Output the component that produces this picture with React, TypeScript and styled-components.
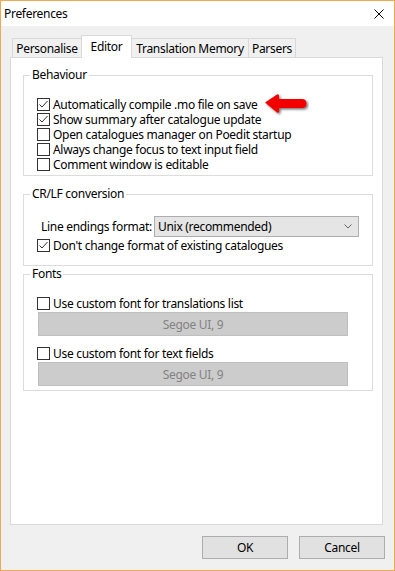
import React from 'react';
import styled, { createGlobalStyle } from "styled-components";


const GlobalStyle = createGlobalStyle`
    html, body {
        margin: 0;
        padding: 0;
        background: #fff;
    }
    body {
        font-family: "Noto Sans", "Open Sans", sans-serif;
        font-size: 12px;
        letter-spacing: -0.3px;
        color: #000;
    }
`

type TabType = {
    title: string
    width: number
    active?: boolean
}

const tabs: TabType[] = [
    {title: 'Personalise', width: 70},
    {title: 'Editor', width: 51, active: true},
    {title: 'Translation Memory', width: 118},
    {title: 'Parsers', width: 48},
]

const CheckBox = (props: { checked?: boolean }) => {
    return (
        <Box>
            {props.checked &&
                <svg width="11" height="11" viewBox="0 0 11 11">
                    <polyline points="1.5,5.5 4,8 9.5,2" fill="none" stroke="#333" strokeWidth="1"/>
                </svg>}
        </Box>
    );
};

const Option = (props: { label: string, checked?: boolean, children?: React.ReactNode }) => {
    return (
        <Row>
            <CheckBox checked={props.checked}/>
            <span>{props.label}</span>
            {props.children}
        </Row>
    );
};

const RedArrow = () => {
    return (
        <Arrow width="46" height="24" viewBox="0 0 46 24">
            <defs>
                <filter id="arrowShadow" x="-20%" y="-30%" width="150%" height="180%">
                    <feDropShadow dx="1.5" dy="1.5" stdDeviation="1" floodColor="#000" floodOpacity="0.55"/>
                </filter>
            </defs>
            <path
                d="M2,10.5 L14,2.5 Q16,1.5 16,4 L16,7 L39,7 Q43.5,7 43.5,11.5 Q43.5,16 39,16 L16,16 L16,19 Q16,21.5 14,20.5 Z"
                fill="#f20000"
                filter="url(#arrowShadow)"
            />
        </Arrow>
    );
};

export default function App() {
    return (
        <>
            <GlobalStyle/>
            <Window>
                <TitleBar>
                    <span>Preferences</span>
                    <svg width="10" height="10" viewBox="0 0 10 10">
                        <path d="M0.5,0.5 L9.5,9.5 M9.5,0.5 L0.5,9.5" stroke="#000" strokeWidth="1"/>
                    </svg>
                </TitleBar>
                <Body>
                    <TabStrip>
                        {tabs.map(t =>
                            <Tab key={t.title} $width={t.width} $active={t.active}>{t.title}</Tab>
                        )}
                    </TabStrip>
                    <Panel>
                        <Group $top={9} $bottom={3}>
                            <Legend>Behaviour</Legend>
                            <Option label="Automatically compile .mo file on save" checked>
                                <RedArrow/>
                            </Option>
                            <Option label="Show summary after catalogue update" checked/>
                            <Option label="Open catalogues manager on Poedit startup"/>
                            <Option label="Always change focus to text input field"/>
                            <Option label="Comment window is editable"/>
                        </Group>
                        <Group $top={10} $bottom={12}>
                            <Legend>CR/LF conversion</Legend>
                            <SelectRow>
                                <SelectLabel>Line endings format:</SelectLabel>
                                <Select>
                                    <span>Unix (recommended)</span>
                                    <svg width="8" height="5" viewBox="0 0 8 5">
                                        <polyline points="0.5,0.5 4,4 7.5,0.5" fill="none" stroke="#666" strokeWidth="1"/>
                                    </svg>
                                </Select>
                            </SelectRow>
                            <Spaced $top={1}>
                                <Option label="Don't change format of existing catalogues" checked/>
                            </Spaced>
                        </Group>
                        <Group $top={0} $bottom={4}>
                            <Legend>Fonts</Legend>
                            <Option label="Use custom font for translations list"/>
                            <FontButton>Segoe UI, 9</FontButton>
                            <Spaced $top={10}>
                                <Option label="Use custom font for text fields"/>
                            </Spaced>
                            <FontButton>Segoe UI, 9</FontButton>
                        </Group>
                    </Panel>
                </Body>
                <Footer>
                    <Button>OK</Button>
                    <Button>Cancel</Button>
                </Footer>
            </Window>
        </>
    );
}

const Window = styled.div`
    width: 395px;
    height: 571px;
    box-sizing: border-box;
    border: 1px solid #efa94f;
    background-color: #f0f0f0;
    display: flex;
    flex-direction: column;
`

const TitleBar = styled.div`
    height: 25px;
    flex-shrink: 0;
    background-color: #fff;
    display: flex;
    align-items: center;
    justify-content: space-between;
    padding: 0 10px 0 3px;
`

const Body = styled.div`
    padding: 9px 11px 0 9px;
    display: flex;
    flex-direction: column;
`

const TabStrip = styled.div`
    height: 22px;
    display: flex;
    align-items: flex-end;
    padding-left: 2px;
`

const Tab = styled.div<{ $width: number, $active?: boolean }>`
    box-sizing: border-box;
    width: ${p => p.$width}px;
    height: ${p => p.$active ? 23 : 19}px;
    margin-bottom: ${p => p.$active ? -1 : 0}px;
    margin-left: -1px;
    border: 1px solid #d9d9d9;
    border-bottom: none;
    background-color: ${p => p.$active ? '#fff' : '#f0f0f0'};
    position: relative;
    z-index: ${p => p.$active ? 1 : 0};
    display: flex;
    align-items: center;
    justify-content: center;
    padding-bottom: ${p => p.$active ? 2 : 0}px;
    line-height: 15px;
    white-space: nowrap;

    &:first-child {
        margin-left: 0;
    }
`

const Panel = styled.div`
    height: 468px;
    box-sizing: border-box;
    border: 1px solid #d9d9d9;
    background-color: #fff;
    padding: 0 9px 0 12px;
`

const Group = styled.fieldset<{ $top: number, $bottom: number }>`
    margin: ${p => p.$top}px 0 0;
    border: 1px solid #dcdcdc;
    padding: 14px 13px ${p => p.$bottom}px 13px;
    min-width: 0;
`

const Legend = styled.legend`
    padding: 0 2px;
    margin-left: -7px;
    line-height: 16px;
`

const Row = styled.div`
    height: 15px;
    line-height: 15px;
    display: flex;
    align-items: center;
    gap: 3px;
    white-space: nowrap;
    position: relative;
`

const Box = styled.span`
    width: 13px;
    height: 13px;
    box-sizing: border-box;
    border: 1px solid #333;
    background-color: #fff;
    display: flex;
    align-items: center;
    justify-content: center;
    flex-shrink: 0;
`

const Arrow = styled.svg`
    position: absolute;
    left: 226px;
    top: -5px;
`

const Spaced = styled.div<{ $top: number }>`
    margin-top: ${p => p.$top}px;
`

const SelectRow = styled.div`
    height: 21px;
    line-height: 15px;
    display: flex;
    align-items: center;
`

const SelectLabel = styled.span`
    padding-left: 4px;
    white-space: nowrap;
`

const Select = styled.div`
    margin-left: auto;
    width: 205px;
    height: 21px;
    box-sizing: border-box;
    border: 1px solid #adadad;
    background-color: #e5e5e5;
    padding: 0 6px 0 3px;
    display: flex;
    align-items: center;
    justify-content: space-between;
`

const FontButton = styled.div`
    margin: 1px 0 0 1px;
    width: 310px;
    height: 24px;
    box-sizing: border-box;
    border: 1px solid #bfbfbf;
    background-color: #ccc;
    color: #838383;
    display: flex;
    align-items: center;
    justify-content: center;
`

const Footer = styled.div`
    display: flex;
    justify-content: flex-end;
    gap: 11px;
    padding: 11px 9px 0 0;
`

const Button = styled.div`
    width: 86px;
    height: 23px;
    box-sizing: border-box;
    border: 1px solid #adadad;
    background-color: #e1e1e1;
    display: flex;
    align-items: center;
    justify-content: center;
`
